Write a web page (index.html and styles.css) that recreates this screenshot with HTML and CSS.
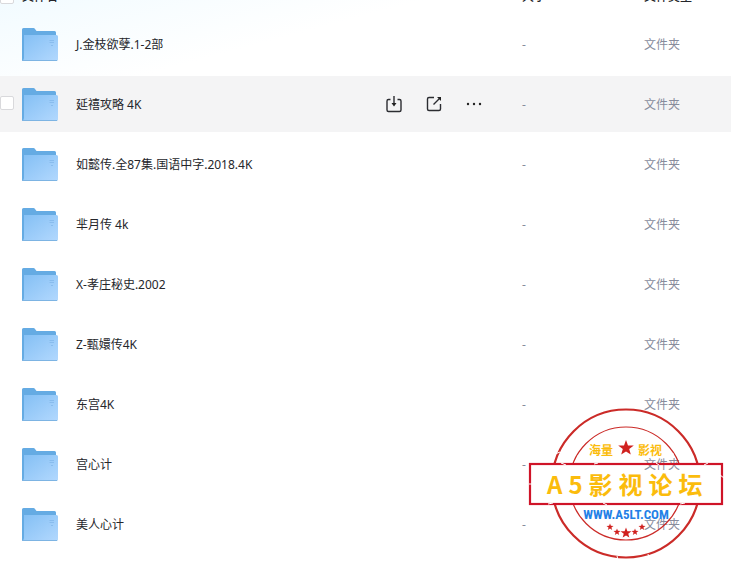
FILE: index.html
```
<!DOCTYPE html>
<html lang="zh-CN">

<head>
  <meta charset="utf-8">
  <title>文件列表</title>
  <link rel="stylesheet" href="styles.css">
</head>

<body>
  <svg width="0" height="0" class="sprite" aria-hidden="true">
    <defs>
      <linearGradient id="folder-front" x1="0" y1="0" x2="1" y2="1">
        <stop offset="0" stop-color="#83bff4"/>
        <stop offset="1" stop-color="#b2d8fe"/>
      </linearGradient>
      <symbol id="folder" viewBox="0 0 36 34">
        <path d="M0 1.500q0-1.500 1.500-1.500h10q1 0 1.500 1l1.500 2h18q1.500 0 1.500 1.500v28h-34z" fill="#65abe3"/>
        <path d="M2 7h32.500q1.500 0 1.500 1.500v23q0 1.500-1.500 1.500h-34.500q2-1 2-3z" fill="url(#folder-front)"/>
        <path d="M0 32.500h35" stroke="#7db4e3"/>
        <path d="M27.500 12.500h4.500M27.500 14.500h4.500M29 17.500h2" stroke="#7fb5e8" stroke-width=".7"/>
      </symbol>
      <path id="star" d="M0-8 2-2.600 7.800-2.400 3.200 1.100 4.800 6.600 0 3.400-4.800 6.600-3.200 1.100-7.800-2.400-2-2.600z" fill="#d0211f"/>
    </defs>
  </svg>

  <table class="file-list">
    <thead>
      <tr>
        <th class="check"><input type="checkbox" aria-label="全选"></th>
        <th class="name">文件名</th>
        <th class="size">大小</th>
        <th class="type">文件类型</th>
      </tr>
    </thead>
    <tbody>
      <tr>
        <td></td>
        <td><div class="file"><svg class="folder"><use href="#folder"/></svg><a href="#">J.金枝欲孽.1-2部</a></div></td>
        <td>-</td>
        <td>文件夹</td>
      </tr>
      <tr class="active">
        <td><input type="checkbox" aria-label="选择 延禧攻略 4K"></td>
        <td>
          <div class="file">
            <svg class="folder"><use href="#folder"/></svg><a href="#">延禧攻略 4K</a>
            <div class="actions">
              <button type="button" aria-label="下载">
                <svg viewBox="0 0 20 20"><path d="M6.500 5.500h-2q-1.500 0-1.500 1.500v9q0 1.500 1.500 1.500h11q1.500 0 1.500-1.500v-9q0-1.500-1.500-1.500h-2M10 2v9"/><path class="solid" d="M7.500 9h5l-2.500 3.500z"/></svg>
              </button>
              <button type="button" aria-label="分享">
                <svg viewBox="0 0 20 20"><path d="M10 3.500h-5q-1.500 0-1.500 1.500v10q0 1.500 1.500 1.500h10q1.500 0 1.500-1.500v-5M9.500 10.500l6-6"/><path class="solid" d="M13 3h4v4z"/></svg>
              </button>
              <button type="button" aria-label="更多">
                <svg viewBox="0 0 20 20"><g class="solid"><circle cx="4" cy="10" r="1.200"/><circle cx="10" cy="10" r="1.200"/><circle cx="16" cy="10" r="1.200"/></g></svg>
              </button>
            </div>
          </div>
        </td>
        <td>-</td>
        <td>文件夹</td>
      </tr>
      <tr>
        <td></td>
        <td><div class="file"><svg class="folder"><use href="#folder"/></svg><a href="#">如懿传.全87集.国语中字.2018.4K</a></div></td>
        <td>-</td>
        <td>文件夹</td>
      </tr>
      <tr>
        <td></td>
        <td><div class="file"><svg class="folder"><use href="#folder"/></svg><a href="#">芈月传 4k</a></div></td>
        <td>-</td>
        <td>文件夹</td>
      </tr>
      <tr>
        <td></td>
        <td><div class="file"><svg class="folder"><use href="#folder"/></svg><a href="#">X-孝庄秘史.2002</a></div></td>
        <td>-</td>
        <td>文件夹</td>
      </tr>
      <tr>
        <td></td>
        <td><div class="file"><svg class="folder"><use href="#folder"/></svg><a href="#">Z-甄嬛传4K</a></div></td>
        <td>-</td>
        <td>文件夹</td>
      </tr>
      <tr>
        <td></td>
        <td><div class="file"><svg class="folder"><use href="#folder"/></svg><a href="#">东宫4K</a></div></td>
        <td>-</td>
        <td>文件夹</td>
      </tr>
      <tr>
        <td></td>
        <td><div class="file"><svg class="folder"><use href="#folder"/></svg><a href="#">宫心计</a></div></td>
        <td>-</td>
        <td>文件夹</td>
      </tr>
      <tr>
        <td></td>
        <td><div class="file"><svg class="folder"><use href="#folder"/></svg><a href="#">美人心计</a></div></td>
        <td>-</td>
        <td>文件夹</td>
      </tr>
    </tbody>
  </table>

  <svg class="stamp" viewBox="0 0 196 154">
    <clipPath id="outside-band"><path d="M0 0h196v56H0zM0 98h196v56H0z"/></clipPath>
    <g clip-path="url(#outside-band)" fill="none" stroke="#cb2b28">
      <circle cx="98" cy="76.500" r="74" stroke-width="2.200"/>
      <circle cx="98" cy="76.500" r="56.500" stroke-width="1.200"/>
    </g>
    <rect x="2" y="57" width="192" height="40" fill="none" stroke="#cf1428" stroke-width="2.200"/>
    <!-- worn edges -->
    <path d="M27 47l5-2M160 33l5-3M89 149l1 4M120 147l1 4M43 124l3-2M33 56l5 2M66 57l4-1M128 56l3 2M176 58l4-2M1 77h3M20 97l5-1M75 96l4 2M152 97l5-1M192 68l4 3M49 49l3 1M142 48l4-1" stroke="#fff" stroke-width="1"/>
    <use href="#star" x="98" y="41"/>
    <text class="stamp-small" x="61" y="48">海量</text>
    <text class="stamp-small" x="110" y="48">影视</text>
    <text class="stamp-title" x="19" y="87">A5影视论坛</text>
    <text class="stamp-url" x="98" y="112">WWW.A5LT.COM</text>
    <use href="#star" transform="translate(98 126) scale(.7)"/>
    <use href="#star" transform="translate(89 125) scale(.45)"/>
    <use href="#star" transform="translate(107 125) scale(.45)"/>
    <use href="#star" transform="translate(82 120) scale(.45)"/>
    <use href="#star" transform="translate(114 120) scale(.45)"/>
  </svg>
</body>

</html>
```
FILE: styles.css
```
body {
  margin: 0;
  overflow: hidden;
  font: 12px/20px 'Noto Sans', 'Noto Sans CJK SC', sans-serif;
  color: #25262b;
  background: #fff linear-gradient(165deg, #f2fbff 0, #fff 110px) no-repeat;
}

.sprite {
  position: absolute;
}

.file-list {
  width: 100%;
  margin-top: -22px;
  table-layout: fixed;
  border-spacing: 0 4px;
}

th,
td {
  padding: 0;
  text-align: left;
}

th {
  height: 30px;
  font-weight: 500;
}

td {
  box-sizing: border-box;
  height: 56px;
  color: #878c9c;
}

td + td {
  padding-top: 2px;
}

.check {
  width: 22px;
}

.size {
  width: 122px;
}

.type {
  width: 87px;
}

.active td {
  background: #f4f4f5;
}

input[type="checkbox"] {
  display: block;
  appearance: none;
  box-sizing: border-box;
  width: 14px;
  height: 14px;
  margin: 0;
  border: 1px solid #d9d9dc;
  border-radius: 2px;
  background: #fff;
}

td input[type="checkbox"] {
  margin-bottom: 2px;
}

.file {
  display: flex;
  align-items: center;
}

.folder {
  width: 36px;
  height: 34px;
  margin-right: 18px;
}

.file a {
  color: #25262b;
  text-decoration: none;
}

.actions {
  display: flex;
  gap: 20px;
  margin: 0 38px 2px auto;
}

.actions button {
  width: 20px;
  height: 20px;
  padding: 0;
  border: 0;
  background: none;
}

.actions svg {
  display: block;
  fill: none;
  stroke: #2b2c31;
  stroke-width: 1.4;
}

.actions .solid {
  fill: #222;
  stroke: none;
}

.stamp {
  position: absolute;
  top: 407px;
  right: 7px;
  width: 196px;
  height: 154px;
  pointer-events: none;
}

.stamp text {
  font-family: 'Noto Sans CJK SC', sans-serif;
  font-weight: bold;
  fill: #fbbc0c;
}

.stamp .stamp-small {
  font-size: 12px;
}

.stamp .stamp-title {
  font-size: 24px;
  letter-spacing: 6px;
}

.stamp .stamp-url {
  font-family: 'Roboto Condensed', 'Liberation Sans Narrow', 'Liberation Sans', sans-serif;
  font-size: 13px;
  fill: #2380e6;
  text-anchor: middle;
}
```
